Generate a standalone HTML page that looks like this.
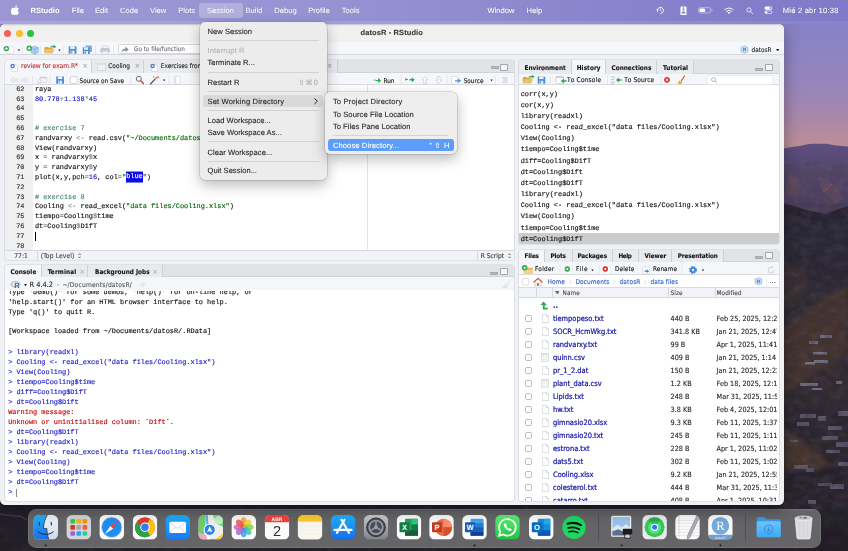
<!DOCTYPE html>
<html lang="es">
<head>
<meta charset="utf-8">
<title>datosR - RStudio</title>
<style>
*{box-sizing:border-box;margin:0;padding:0}
html,body{width:848px;height:551px;overflow:hidden}
body{position:relative;background:#2c2730;font-family:"DejaVu Sans Condensed","DejaVu Sans","Liberation Sans",sans-serif;font-size:6.4px;color:#111;text-rendering:geometricPrecision;-webkit-text-stroke:.1px currentColor;-webkit-font-smoothing:antialiased}
body>div{will-change:transform}
.abs{position:absolute}
.t{position:absolute;white-space:nowrap;line-height:1;transform:translateY(-50%)}
.b{font-weight:bold}
.mono{font-family:"Liberation Mono","DejaVu Sans Mono",monospace;font-size:6.92px;-webkit-text-stroke:.15px currentColor}
/* wallpaper */
#wall{position:absolute;left:0;top:0;width:848px;height:551px}
/* menubar */
#menubar{z-index:5;position:absolute;left:0;top:0;width:848px;height:21px;background:linear-gradient(90deg,#9c97d4 0%,#9893d2 35%,#8e8acf 60%,#8480cb 80%,#7f7bc9 100%);font-family:"Liberation Sans",sans-serif;font-size:7.6px;color:#fff}
#menubar .t{top:11px;text-shadow:0 0 1.5px rgba(40,30,90,.35)}
#strip{z-index:4;position:absolute;left:0;top:21px;width:848px;height:3.2px;background:linear-gradient(90deg,#a9a4db 0%,#a39edb 40%,#938ed2 75%,#8882c8 100%)}
/* window */
#win{z-index:1;position:absolute;left:0;top:24.2px;width:783.5px;height:481.3px;border-radius:5.5px;background:#eff1f4;box-shadow:0 5px 16px rgba(0,0,0,.35);overflow:hidden}
#pg{position:absolute;left:0;top:-24.2px;width:848px;height:551px}
#titlebar{position:absolute;left:0;top:24px;width:784px;height:18px;background:#f1f1f1}
#maintb{position:absolute;left:0;top:42px;width:784px;height:13.5px;background:#f5f7fa;border-bottom:.5px solid #d5d9de}
.pane{position:absolute;background:#fff;box-shadow:0 0 0 .6px #cdd2d8;border-radius:2px;overflow:hidden}
.tabrow{position:absolute;left:0;top:0;width:100%;background:#e1e3e7;border-bottom:.5px solid #cfd4d9}
.tab{position:absolute;top:0;height:100%;border-right:.5px solid #cdd1d6;background:#e8eaed}
.tab.sel{background:#f4f6f9}
.ptb{position:absolute;left:0;width:100%;background:#f4f6f9;border-bottom:.5px solid #d9dde2}
</style>
</head>
<body>
<!--WALL-->
<svg id="wall" width="848" height="551" viewBox="0 0 848 551">
<defs>
<linearGradient id="sky" x1="0" y1="0" x2="0" y2="1">
<stop offset="0" stop-color="#847fc6"/>
<stop offset=".15" stop-color="#8781c6"/>
<stop offset=".35" stop-color="#8d84c3"/>
<stop offset=".58" stop-color="#9885ba"/>
<stop offset=".75" stop-color="#a787ad"/>
<stop offset=".88" stop-color="#b58b9f"/>
<stop offset=".95" stop-color="#ba8e98"/>
<stop offset="1" stop-color="#b0868f"/>
</linearGradient>
<linearGradient id="m1" x1="0" y1="0" x2="0" y2="1"><stop offset="0" stop-color="#5f507e"/><stop offset="1" stop-color="#52466f"/></linearGradient>
<linearGradient id="m2" x1="0" y1="0" x2="0" y2="1"><stop offset="0" stop-color="#54466a"/><stop offset=".5" stop-color="#4d4160"/><stop offset="1" stop-color="#473b56"/></linearGradient>
<linearGradient id="m3" x1="0" y1="0" x2="0" y2="1">
<stop offset="0" stop-color="#25222e"/><stop offset=".15" stop-color="#2a2733"/><stop offset=".3" stop-color="#2e2a32"/><stop offset=".45" stop-color="#352c30"/><stop offset=".6" stop-color="#2d282e"/><stop offset="1" stop-color="#211e27"/>
</linearGradient>
<filter id="nz" x="0" y="0" width="100%" height="100%"><feTurbulence type="fractalNoise" baseFrequency=".09 .13" numOctaves="3" seed="7" result="n"/><feColorMatrix in="n" type="matrix" values="0 0 0 0 .42  0 0 0 0 .32  0 0 0 0 .32  1.6 0 0 0 -.66"/></filter>
<filter id="nz2" x="0" y="0" width="100%" height="100%"><feTurbulence type="fractalNoise" baseFrequency=".12 .16" numOctaves="3" seed="3" result="n"/><feColorMatrix in="n" type="matrix" values="0 0 0 0 .04  0 0 0 0 .03  0 0 0 0 .06  0 1.8 0 0 -.7"/></filter>
<filter id="bl" x="-5%" y="-5%" width="110%" height="110%"><feGaussianBlur stdDeviation=".7"/></filter>
<filter id="bl2" x="-10%" y="-10%" width="120%" height="120%"><feGaussianBlur stdDeviation="2.200"/></filter>
</defs>
<rect width="848" height="551" fill="#211e27"/>
<rect width="848" height="152" fill="url(#sky)"/>
<g filter="url(#bl)">
<path d="M760 154 L784 148.500 L792 147 L800 146 L806 144.500 L812 143.800 L826 143.800 L836 145.500 L848 146.500 L848 172 L760 172Z" fill="url(#m1)"/>
<path d="M760 168 L784 164 L790 162.500 L799 161 L806 162 L815 160 L826 161.500 L838 160.500 L848 162 L848 218 L760 218Z" fill="url(#m2)"/>
<path d="M790 170l12 14-6 18-12-8z M818 176l16 8 10 14-8 6-14-14z" fill="#6a4a58" fill-opacity=".45"/>
<path d="M832 184l-9 8" stroke="#c8a8a0" stroke-opacity=".3" stroke-width=".8"/>
<path d="M760 202 L784 203.500 L796 206.500 L806 210 L816 212 L826 214 L836 210 L848 206 L848 551 L760 551Z" fill="url(#m3)"/>
</g>
<g filter="url(#bl2)">
<path d="M848 285 L820 300 L800 315 L784 330 L784 392 L806 380 L826 366 L848 350Z" fill="#46342f" fill-opacity=".9"/>
<path d="M784 262 L800 268 L812 282 L800 300 L784 310Z" fill="#3b302f" fill-opacity=".8"/>
<path d="M784 428 L806 444 L832 466 L812 470 L784 470Z" fill="#46352c" fill-opacity=".95"/>
<path d="M784 215l30 8 34-4v30l-64 6z" fill="#2a2734" fill-opacity=".9"/>
</g>
<g filter="url(#bl)"><rect x="820.0" y="335.0" width="12.0" height="3.0" fill="#77758c" fill-opacity="0.9"/><rect x="809.0" y="341.0" width="9.0" height="3.0" fill="#77758c" fill-opacity="0.9"/><rect x="813.0" y="352.0" width="14.0" height="2.5" fill="#77758c" fill-opacity="0.9"/><rect x="805.0" y="362.0" width="10.0" height="2.5" fill="#77758c" fill-opacity="0.9"/><rect x="814.0" y="360.0" width="14.0" height="3.0" fill="#77758c" fill-opacity="0.9"/><rect x="800.0" y="383.0" width="18.0" height="3.0" fill="#77758c" fill-opacity="0.9"/><rect x="836.0" y="381.0" width="6.0" height="3.0" fill="#77758c" fill-opacity="0.9"/><rect x="812.0" y="388.0" width="10.0" height="2.0" fill="#77758c" fill-opacity="0.9"/><rect x="838.0" y="411.0" width="10.0" height="5.0" fill="#5f5d72" fill-opacity="0.85"/><rect x="800.0" y="414.0" width="16.0" height="4.0" fill="#5f5d72" fill-opacity="0.85"/><rect x="818.0" y="416.0" width="8.0" height="5.0" fill="#5f5d72" fill-opacity="0.85"/><rect x="797.0" y="422.0" width="12.0" height="4.0" fill="#5f5d72" fill-opacity="0.85"/><rect x="828.0" y="426.0" width="14.0" height="4.0" fill="#5f5d72" fill-opacity="0.85"/><rect x="822.0" y="436.0" width="16.0" height="4.0" fill="#5f5d72" fill-opacity="0.85"/><rect x="836.0" y="442.0" width="12.0" height="5.0" fill="#5f5d72" fill-opacity="0.85"/><rect x="826.0" y="450.0" width="14.0" height="3.0" fill="#5f5d72" fill-opacity="0.85"/><rect x="838.0" y="462.0" width="10.0" height="4.0" fill="#5f5d72" fill-opacity="0.85"/><rect x="794.0" y="465.0" width="14.0" height="4.0" fill="#5f5d72" fill-opacity="0.85"/><rect x="806.0" y="468.0" width="8.0" height="4.0" fill="#5f5d72" fill-opacity="0.85"/><rect x="818.0" y="483.0" width="14.0" height="3.0" fill="#5f5d72" fill-opacity="0.85"/><rect x="830.0" y="484.0" width="14.0" height="5.0" fill="#5f5d72" fill-opacity="0.85"/><rect x="808.0" y="500.0" width="8.0" height="4.0" fill="#5f5d72" fill-opacity="0.85"/><rect x="790.0" y="440.0" width="8.0" height="2.0" fill="#5f5d72" fill-opacity="0.85"/></g>
<rect x="784" y="160" width="64" height="350" filter="url(#nz)" opacity=".16"/>
<rect x="784" y="204" width="64" height="306" filter="url(#nz2)" opacity=".6"/>
<rect x="0" y="506" width="848" height="45" filter="url(#nz)" opacity=".08"/>
<path d="M0 514c8 1 14 3 20 2l7 4" stroke="#4a3e58" stroke-width="1.500" fill="none" stroke-opacity=".7"/>
</svg>
<!--MENUBAR-->
<div id="menubar">
<div class="abs" style="left:199px;top:3px;width:44px;height:14.5px;border-radius:3px;background:rgba(255,255,255,.26)"></div>
<svg class="abs" style="left:10.8px;top:4.6px" width="8.6" height="10.4" viewBox="0 0 170 205"><path fill="#fff" d="M150.4 155.7c-2.9 6.7-6.3 12.8-10.300 18.500-5.400 7.700-9.900 13.100-13.300 16.100-5.300 4.900-11 7.400-17.100 7.500-4.400 0-9.700-1.200-15.800-3.800-6.200-2.500-11.800-3.800-17-3.800-5.400 0-11.300 1.200-17.500 3.800-6.300 2.500-11.300 3.900-15.200 4-5.900 0.300-11.700-2.300-17.600-7.800-3.700-3.200-8.400-8.800-13.900-16.700-6-8.400-10.900-18.100-14.700-29.200C3.800 132.300 1.800 120.700 1.800 109.500c0-12.800 2.800-23.900 8.300-33.200 4.400-7.400 10.200-13.300 17.400-17.600 7.300-4.300 15.100-6.500 23.500-6.600 4.600 0 10.700 1.400 18.200 4.200 7.500 2.800 12.300 4.200 14.400 4.200 1.600 0 6.900-1.700 16-5 8.600-3.100 15.900-4.400 21.800-3.900 16.100 1.300 28.300 7.700 36.300 19.200-14.400 8.700-21.600 21-21.400 36.700 0.100 12.200 4.600 22.400 13.300 30.500 3.900 3.700 8.300 6.600 13.200 8.700-1.100 3.100-2.200 6-3.400 8.900zM119.100 7c0 9.600-3.500 18.600-10.500 26.900-8.400 9.900-18.700 15.600-29.700 14.700-0.100-1.200-0.200-2.400-0.200-3.600 0-9.200 4-19.100 11.100-27.200 3.600-4.100 8.100-7.500 13.600-10.200C108.900 4.900 114.100 3.400 119 3.100c0.100 1.300 0.200 2.600 0.200 3.900z"/></svg>
<span class="t b" style="left:30.5px">RStudio</span>
<span class="t" style="left:71.75px">File</span>
<span class="t" style="left:95px">Edit</span>
<span class="t" style="left:120px">Code</span>
<span class="t" style="left:150px">View</span>
<span class="t" style="left:178.25px">Plots</span>
<span class="t" style="left:207px">Session</span>
<span class="t" style="left:245.5px">Build</span>
<span class="t" style="left:274.25px">Debug</span>
<span class="t" style="left:308.25px">Profile</span>
<span class="t" style="left:341.75px">Tools</span>
<span class="t" style="left:487.5px">Window</span>
<span class="t" style="left:526.5px">Help</span>
<span class="t" style="letter-spacing:0.201px;left:782.800px">Mié 2 abr 10:38</span>
<svg class="abs" style="left:656.4px;top:6px" width="8.800" height="8.800" viewBox="0 0 20 20"><circle cx="10" cy="10" r="7" fill="none" stroke="#fff" stroke-width="1.8" stroke-dasharray="36 8" transform="rotate(150 10 10)"/><path d="M10 6v4.300l2.600 1.800" fill="none" stroke="#fff" stroke-width="1.600" stroke-linecap="round"/><path d="M1 8l2.500 3.500L6.500 8z" fill="#fff"/></svg>
<svg class="abs" style="left:679.5px;top:5.700px" width="7" height="9.600" viewBox="0 0 16 22"><rect x="1" y="1" width="14" height="20" rx="3" fill="#fff"/><circle cx="8" cy="8" r="2.600" fill="#8480cb"/><path d="M3.500 17c0-3 2-4.800 4.500-4.800s4.500 1.800 4.500 4.800z" fill="#8480cb"/><rect x="6" y="2.500" width="4" height="1.400" rx=".7" fill="#8480cb"/></svg>
<svg class="abs" style="left:698.3px;top:7.200px" width="15" height="6.600" viewBox="0 0 30 16" preserveAspectRatio="none"><rect x="1" y="1.500" width="24" height="13" rx="4" fill="none" stroke="#fff" stroke-opacity=".6" stroke-width="1.600"/><rect x="3.200" y="3.700" width="11" height="8.600" rx="2.200" fill="#fff"/><path d="M27 5.500c1.600.500 2.200 1.400 2.200 2.500s-.6 2-2.200 2.500z" fill="#fff" fill-opacity=".6"/></svg>
<svg class="abs" style="left:724.2px;top:7px" width="9.800" height="7.200" viewBox="0 0 26 19"><path d="M13 18.500l3.400-3.600a4.700 4.700 0 0 0-6.800 0z" fill="#fff"/><path d="M6.300 11.600a9.400 9.400 0 0 1 13.400 0" fill="none" stroke="#fff" stroke-width="2.600" stroke-linecap="round"/><path d="M2 7a15.500 15.500 0 0 1 22 0" fill="none" stroke="#fff" stroke-width="2.600" stroke-linecap="round"/></svg>
<svg class="abs" style="left:746px;top:6.800px" width="7.400" height="7.400" viewBox="0 0 20 20"><circle cx="8" cy="8" r="5.800" fill="none" stroke="#fff" stroke-width="2"/><path d="M12.400 12.400l5.600 5.600" stroke="#fff" stroke-width="2.200" stroke-linecap="round"/></svg>
<svg class="abs" style="left:763.800px;top:6.400px" width="8.800" height="8.300" viewBox="0 0 21 20"><rect x="1" y="1" width="19" height="8" rx="4" fill="#fff"/><circle cx="15.600" cy="5" r="2.500" fill="#8480cb"/><rect x="1.700" y="11.700" width="17.600" height="6.600" rx="3.300" fill="none" stroke="#fff" stroke-width="1.500"/><circle cx="5.300" cy="15" r="2.600" fill="#fff"/></svg>
</div>
<div id="strip"></div>
<!--WINDOW-->
<div id="win">
<div id="pg">
<div id="titlebar"></div>
<div id="maintb"></div>
<div id="topline" class="abs" style="z-index:2;left:0;top:24px;width:784px;height:2px;background:linear-gradient(#cfcfcf 50%,#e5e5e5 50%)"></div>
<div class="abs" style="left:4.1px;top:30px;width:7.2px;height:7.2px;border-radius:50%;background:#f5605a"></div>
<div class="abs" style="left:16.0px;top:30px;width:7.2px;height:7.2px;border-radius:50%;background:#f9bd2e"></div>
<div class="abs" style="left:27.2px;top:30px;width:7.2px;height:7.2px;border-radius:50%;background:#27c53f"></div>
<span class="t b" style="letter-spacing:0.080px;left:360.5px;top:33.3px;font-family:'Liberation Sans',sans-serif;font-size:7.55px;color:#3a3a3a">datosR - RStudio</span>
<!-- main toolbar -->
<svg class="abs" style="left:2px;top:43.800px" width="112" height="12" viewBox="0 0 112 12">
<!-- new file -->
<rect x="5" y="2.200" width="6.500" height="7.600" fill="#fff" stroke="#c9ccd1" stroke-width=".4"/>
<circle cx="4.400" cy="4.600" r="2.700" fill="#2fa84f"/><path d="M2.900 4.600h3M4.400 3.100v3" stroke="#fff" stroke-width="1"/>
<path d="M15.700 5.600h2.400l-1.200 1.600z" fill="#222"/>
<path d="M20.500 1.500v9" stroke="#d0d4d9" stroke-width=".5"/>
<!-- new project -->
<path d="M29 3.500l4-1.500 3.500 1.500v5l-3.700 1.800-3.800-1.800z" fill="#a9cdee" stroke="#6fa5d8" stroke-width=".4"/>
<path d="M29 3.500l3.800 1.600 3.700-1.600M32.800 5.100v5.200" stroke="#6fa5d8" stroke-width=".4" fill="none"/>
<circle cx="27.200" cy="4.300" r="2.700" fill="#2fa84f"/><path d="M25.700 4.300h3M27.200 2.800v3" stroke="#fff" stroke-width="1"/>
<path d="M38.600 1.500v9" stroke="#d0d4d9" stroke-width=".5"/>
<!-- open folder -->
<path d="M42.500 9.500l1.500-4.500h8.500l-1.700 4.500z" fill="#e9c36b"/><path d="M42.300 9.400v-5.600l1-.9h2.600l.8.900h3.800v1.300h-6.500z" fill="#d9a63f"/>
<path d="M47.500 3.800c1.500-1.800 3-2.200 4.300-1.900v-1.100l2.300 1.900-2.300 1.900v-1.100c-1.400-.3-2.800-.2-4.300.3z" fill="#2fa84f"/>
<path d="M56.200 5.600h2.400l-1.200 1.600z" fill="#222"/>
<path d="M61 1.500v9" stroke="#d0d4d9" stroke-width=".5"/>
<!-- save -->
<path d="M66.700 2.200h7l.8.800v6.800h-7.800z" fill="#4d8fd6"/><rect x="68.200" y="2.200" width="4.600" height="2.800" fill="#eaf2fb"/><rect x="68.500" y="6.700" width="4" height="3.100" fill="#eaf2fb"/><rect x="69.200" y="7.200" width="1.100" height="2" fill="#4d8fd6"/>
<!-- save all -->
<path d="M83.300 1.600h6l.7.700v5.800h-6.700z" fill="#7fb0e4"/>
<path d="M80.800 3.300h6.300l.7.700v6h-7z" fill="#4d8fd6"/><rect x="82.100" y="3.300" width="4" height="2.400" fill="#eaf2fb"/><rect x="82.400" y="7.200" width="3.600" height="2.800" fill="#eaf2fb"/><rect x="83" y="7.700" width="1" height="1.800" fill="#4d8fd6"/>
<path d="M93.600 1.500v9" stroke="#d0d4d9" stroke-width=".5"/>
<!-- print -->
<rect x="100" y="2" width="6" height="3" fill="#f4f4f4" stroke="#b9bdc6" stroke-width=".4"/><rect x="98.600" y="4.500" width="8.800" height="4" rx=".8" fill="#c7cbe0" stroke="#a3a8c4" stroke-width=".4"/><rect x="100" y="7.300" width="6" height="2.400" fill="#fff" stroke="#b9bdc6" stroke-width=".4"/>
<path d="M111.700 1.500v9" stroke="#d0d4d9" stroke-width=".5"/>
</svg>
<div class="abs" style="left:117.500px;top:44.200px;width:96px;height:10.300px;background:#fff;border:.5px solid #d3d7dc;border-radius:1.500px"></div>
<svg class="abs" style="left:120.500px;top:46.200px" width="8" height="7" viewBox="0 0 8 7"><path d="M.5 6.500c.3-2.600 1.700-4 4-4.100v-1.900l3.200 2.900-3.200 2.900v-1.900c-1.800 0-3 .7-4 2.100z" fill="#8d939c"/></svg>
<span class="t" style="left:134px;top:50.600px;color:#6a6a6a;font-size:6.300px">Go to file/function</span>
<svg class="abs" style="left:740px;top:45px" width="9" height="9" viewBox="0 0 9 9"><path d="M1 2.300l3.500-1.500 3.500 1.500v4.500l-3.500 1.700-3.500-1.700z" fill="#bcd9f3" stroke="#7fb0e0" stroke-width=".4"/><text x="4.500" y="6.300" font-size="4.500" font-weight="bold" text-anchor="middle" fill="#3f7fc4" font-family="Liberation Sans,sans-serif">R</text></svg>
<span class="t" style="left:751.600px;top:50.200px;font-size:6.400px;color:#222">datosR</span>
<svg class="abs" style="left:776.300px;top:48.800px" width="3.400" height="2.400" viewBox="0 0 3.400 2.400"><path d="M0 0h3.400l-1.700 2.400z" fill="#222"/></svg>

<div class="pane" style="left:5px;top:60.500px;width:508.500px;height:199.500px">
<div class="tabrow" style="height:12.8px"></div>
<div class="tab sel" style="left:0;width:87px;height:13.3px;border-radius:2px 2px 0 0"></div>
<div class="tab" style="left:87px;width:52px;height:12.8px"></div>
<div class="tab" style="left:139px;width:98px;height:12.8px"></div>
<div class="tab" style="left:237px;width:95.5px;height:12.8px"></div>
<svg class="abs" style="left:4.5px;top:2.5px" width="8" height="9" viewBox="0 0 8 9"><path d="M2 1.500h3.800l1.700 1.700v5.300h-5.500z" fill="#fff" stroke="#b4b8bf" stroke-width=".4"/><circle cx="2.600" cy="3" r="2.300" fill="#5a78c8"/><circle cx="2.600" cy="3" r="1" fill="#dfe6f7"/></svg>
<span class="t" style="left:16.100px;top:5.900px;color:#c22a22;font-size:6.600px">review for exam.R*</span>
<span class="t" style="left:77.500px;top:6.000px;color:#9aa0a8;font-size:7px">×</span>
<svg class="abs" style="left:92px;top:3px" width="8.500" height="7.500" viewBox="0 0 8.500 7.500"><rect x=".3" y=".3" width="7.900" height="6.900" fill="#fff" stroke="#b9bdc4" stroke-width=".5"/><path d="M.3 2.300h7.900M.3 4h7.900M.3 5.700h7.900M2.900 .3v6.900M5.600 .3v6.900" stroke="#d4d7dc" stroke-width=".4"/><rect x=".3" y=".3" width="7.900" height="1.600" fill="#dcdfe4"/></svg>
<span class="t" style="left:103.300px;top:5.900px;color:#222;font-size:6.450px">Cooling</span>
<span class="t" style="left:129.800px;top:6.000px;color:#9aa0a8;font-size:7px">×</span>
<svg class="abs" style="left:144.500px;top:2.500px" width="8" height="9" viewBox="0 0 8 9"><path d="M2 1.500h3.800l1.700 1.700v5.300h-5.500z" fill="#fff" stroke="#b4b8bf" stroke-width=".4"/><circle cx="2.600" cy="3" r="2.300" fill="#5a78c8"/><circle cx="2.600" cy="3" r="1" fill="#dfe6f7"/></svg>
<span class="t" style="left:155.800px;top:5.900px;color:#222;font-size:6.450px">Exercises from class.R</span>
<span class="t" style="left:229px;top:6.000px;color:#9aa0a8;font-size:7px">×</span>
<span class="t" style="left:250px;top:5.900px;color:#222;font-size:6.450px">homework week 3.R</span>
<span class="t" style="left:322px;top:6.000px;color:#9aa0a8;font-size:7px">×</span>
<div class="abs" style="left:485.5px;top:5.900px;width:8px;height:2.800px;border-radius:.8px;background:#b9bdc3;border:.4px solid #a3a8af"></div>
<div class="abs" style="left:494.8px;top:3.3px;width:8px;height:7.200px;border:.5px solid #a3a8af;border-top-width:1.400px;border-radius:.8px;background:#f4f6f8"></div>
<div class="ptb" style="top:12.800px;height:12px"></div>
<svg class="abs" style="left:0;top:14.000px" width="509" height="12" viewBox="0 0 509 12">
<path d="M5 6l4-3.200v1.900h4v2.600h-4v1.900z" fill="#e9ebee" stroke="#d2d5da" stroke-width=".4"/>
<path d="M24 6l-4-3.200v1.900h-4v2.600h4v1.900z" fill="#e9ebee" stroke="#d2d5da" stroke-width=".4"/>
<path d="M27.500 1.500v9" stroke="#d4d8dd" stroke-width=".5"/>
<rect x="35" y="3" width="7" height="5.500" rx=".6" fill="#f2f4f7" stroke="#b9bec6" stroke-width=".4"/><rect x="35" y="3" width="7" height="1.400" fill="#c7cfdc"/><circle cx="34.500" cy="7.500" r="1.700" fill="#fff" stroke="#a8adb5" stroke-width=".5"/><path d="M33.400 8.700l-1.300 1.400" stroke="#a8adb5" stroke-width=".7"/>
<path d="M45 1.500v9" stroke="#d4d8dd" stroke-width=".5"/>
<path d="M51.200 2.200h7l.8.800v6.800h-7.800z" fill="#4d8fd6"/><rect x="52.700" y="2.200" width="4.600" height="2.800" fill="#eaf2fb"/><rect x="53" y="6.700" width="4" height="3.100" fill="#eaf2fb"/><rect x="53.700" y="7.200" width="1.100" height="2" fill="#4d8fd6"/>
<rect x="65.300" y="2.600" width="7" height="7" rx="1.500" fill="#fff" stroke="#a9a9a9" stroke-width=".5"/>
<path d="M125.500 1.500v9" stroke="#d4d8dd" stroke-width=".5"/>
<circle cx="133.800" cy="4.800" r="2.500" fill="#eef3fa" stroke="#4a4f57" stroke-width=".8"/><path d="M135.600 6.600l2.800 2.900" stroke="#b0482e" stroke-width="1.300" stroke-linecap="round"/>
<path d="M145.500 10l6-6.500" stroke="#555b66" stroke-width="1.200" stroke-linecap="round"/><path d="M150.200 4.800l1.300-1.400" stroke="#e8b530" stroke-width="1.300" stroke-linecap="round"/><path d="M153 1.500l.5 1.200 1.200.5-1.200.5-.5 1.200-.5-1.200-1.200-.5 1.200-.5z" fill="#e0559a"/><path d="M148.500 1.800l.3.800.8.300-.8.300-.3.800-.3-.8-.8-.3.800-.3z" fill="#58a6e8"/>
<path d="M158 5.600h2.400l-1.200 1.600z" fill="#222"/>
<path d="M164 1.500v9" stroke="#d4d8dd" stroke-width=".5"/>
<rect x="169.500" y="2.300" width="6" height="7.600" rx=".5" fill="#fff" stroke="#c3c7cd" stroke-width=".5"/><rect x="169.500" y="2.300" width="1.800" height="7.600" fill="#dfe2e7"/>
<path d="M368 6h3" stroke="#9ec0ea" stroke-width="1.200"/><path d="M370.500 6h2.500v-2l3.200 2.500-3.200 2.500v-2h-2.500z" fill="#2fa84f"/>
<path d="M396 1.500v9" stroke="#d4d8dd" stroke-width=".5"/>
<path d="M400.500 5.500h2.500" stroke="#4d8fd6" stroke-width="1.200"/><path d="M400.800 3.500l2 1.800-2 1.800z" fill="#4d8fd6" transform="translate(-.5 0)"/><path d="M404.500 5h2.300v-1.800l3 2.500-3 2.500v-1.800h-2.300z" fill="#2fa84f"/>
<path d="M420 2.500l3 3.300h-1.700v3.700h-2.600v-3.700h-1.700z" fill="#f7f8fa" stroke="#bfc3c9" stroke-width=".55"/>
<path d="M433.800 9.500l3-3.300h-1.700v-3.700h-2.600v3.700h-1.700z" fill="#f7f8fa" stroke="#bfc3c9" stroke-width=".55"/>
<path d="M442 1.500v9" stroke="#d4d8dd" stroke-width=".5"/>
<rect x="446.500" y="2.500" width="6" height="7.500" rx=".5" fill="#fff" stroke="#c3c7cd" stroke-width=".5"/><path d="M450 6.200h3v-1.600l3 2.200-3 2.200v-1.600h-3z" fill="#4d8fd6"/>
<path d="M485.300 5.600h2.400l-1.200 1.600z" fill="#222"/>
<path d="M490.500 1.500v9" stroke="#d4d8dd" stroke-width=".5"/>
<path d="M497 4h5.500M498.500 6h4M497 8h5.500" stroke="#b9bdc4" stroke-width=".8"/>
</svg>
<span class="t" style="left:74.500px;top:20.400px;font-size:6.400px">Source on Save</span>
<span class="t" style="left:378.500px;top:20.400px;font-size:6.400px">Run</span>
<span class="t" style="left:458.700px;top:20.400px;font-size:6.400px">Source</span>
<div class="abs" style="left:0;top:24.500px;width:28px;height:166px;background:#f0f0f0"></div>
<div class="abs" style="left:361.800px;top:24.500px;width:.6px;height:166px;background:#e4e4e4"></div>
<span class="t mono" style="right:489.0px;top:29.39px;color:#333">62</span>
<span class="t mono" style="left:29.900px;top:29.39px"><span style="color:#111">raya</span></span>
<span class="t mono" style="right:489.0px;top:39.20px;color:#333">63</span>
<span class="t mono" style="left:29.900px;top:39.20px"><span style="color:#1a1ac8">80.778</span><span style="color:#7b8797">+</span><span style="color:#1a1ac8">1.138</span><span style="color:#7b8797">*</span><span style="color:#1a1ac8">45</span></span>
<span class="t mono" style="right:489.0px;top:49.01px;color:#333">64</span>
<span class="t mono" style="right:489.0px;top:58.82px;color:#333">65</span>
<span class="t mono" style="right:489.0px;top:68.63px;color:#333">66</span>
<span class="t mono" style="left:29.900px;top:68.63px"><span style="color:#4c886b"># exercise 7</span></span>
<span class="t mono" style="right:489.0px;top:78.44px;color:#333">67</span>
<span class="t mono" style="left:29.900px;top:78.44px"><span style="color:#111">randvarxy </span><span style="color:#7b8797">&lt;-</span><span style="color:#111"> read.csv(</span><span style="color:#036a07">"~/Documents/datosR/data files/randvarxy.txt"</span><span style="color:#111">, header=TRUE)</span></span>
<span class="t mono" style="right:489.0px;top:88.25px;color:#333">68</span>
<span class="t mono" style="left:29.900px;top:88.25px"><span style="color:#111">View(randvarxy)</span></span>
<span class="t mono" style="right:489.0px;top:98.06px;color:#333">69</span>
<span class="t mono" style="left:29.900px;top:98.06px"><span style="color:#111">x </span><span style="color:#7b8797">=</span><span style="color:#111"> randvarxy</span><span style="color:#7b8797">$</span><span style="color:#111">x</span></span>
<span class="t mono" style="right:489.0px;top:107.87px;color:#333">70</span>
<span class="t mono" style="left:29.900px;top:107.87px"><span style="color:#111">y </span><span style="color:#7b8797">=</span><span style="color:#111"> randvarxy</span><span style="color:#7b8797">$</span><span style="color:#111">y</span></span>
<span class="t mono" style="right:489.0px;top:117.68px;color:#333">71</span>
<span class="t mono" style="left:29.900px;top:117.68px"><span style="color:#111">plot(x,y,pch</span><span style="color:#7b8797">=</span><span style="color:#1a1ac8">16</span><span style="color:#111">, col</span><span style="color:#7b8797">=</span><span style="color:#036a07">"</span><span style="background:#0c0ce8;color:#fff;padding:1.600px 0 1.500px">blue</span><span style="color:#036a07">"</span><span style="color:#111">)</span></span>
<span class="t mono" style="right:489.0px;top:127.49px;color:#333">72</span>
<span class="t mono" style="right:489.0px;top:137.30px;color:#333">73</span>
<span class="t mono" style="left:29.900px;top:137.30px"><span style="color:#4c886b"># exercise 8</span></span>
<span class="t mono" style="right:489.0px;top:147.11px;color:#333">74</span>
<span class="t mono" style="left:29.900px;top:147.11px"><span style="color:#111">Cooling </span><span style="color:#7b8797">&lt;-</span><span style="color:#111"> read_excel(</span><span style="color:#036a07">"data files/Cooling.xlsx"</span><span style="color:#111">)</span></span>
<span class="t mono" style="right:489.0px;top:156.92px;color:#333">75</span>
<span class="t mono" style="left:29.900px;top:156.92px"><span style="color:#111">tiempo</span><span style="color:#7b8797">=</span><span style="color:#111">Cooling</span><span style="color:#7b8797">$</span><span style="color:#111">time</span></span>
<span class="t mono" style="right:489.0px;top:166.73px;color:#333">76</span>
<span class="t mono" style="left:29.900px;top:166.73px"><span style="color:#111">dt</span><span style="color:#7b8797">=</span><span style="color:#111">Cooling</span><span style="color:#7b8797">$</span><span style="color:#111">DifT</span></span>
<span class="t mono" style="right:489.0px;top:176.54px;color:#333">77</span>
<span class="t mono" style="right:489.0px;top:186.35px;color:#333">78</span>
<div class="abs" style="left:30px;top:171.74px;width:.7px;height:8.600px;background:#000"></div>
<div class="abs" style="left:0;top:190px;width:100%;height:9.500px;background:#f1f3f6;border-top:.5px solid #d5d9de"></div>
<div class="abs" style="left:31.500px;top:190px;width:.5px;height:9.500px;background:#d5d9de"></div>
<svg class="abs" style="left:72.600px;top:192.300px" width="3.200" height="5.600" viewBox="0 0 3.200 5.600"><path d="M.4 2l1.200-1.300 1.200 1.300M.4 3.600l1.200 1.300 1.200-1.300" fill="none" stroke="#333" stroke-width=".7"/></svg>
<span class="t" style="letter-spacing:0.021px;left:9.200px;top:195.300px;font-size:6.700px;color:#444">77:1</span>
<span class="t" style="letter-spacing:0.117px;left:35.750px;top:195.300px;font-size:6.700px;color:#444">(Top Level)</span>
<span class="t" style="letter-spacing:0.023px;left:475.750px;top:195.300px;font-size:6.600px;color:#333">R Script</span>
<svg class="abs" style="left:502.6px;top:192.3px" width="3.200" height="5.600" viewBox="0 0 3.200 5.600"><path d="M.4 2l1.200-1.300 1.200 1.300M.4 3.600l1.200 1.300 1.200-1.300" fill="none" stroke="#333" stroke-width=".7"/></svg>
<div class="abs" style="left:472.300px;top:190px;width:.5px;height:9.500px;background:#d5d9de"></div>
</div>
<div class="pane" style="left:5px;top:265px;width:508.500px;height:236.500px">
<div class="tabrow" style="height:12.500px"></div>
<div class="tab sel" style="left:0;width:37px;height:13px;background:#f4f6f9"></div>
<div class="tab" style="left:37px;width:46px;height:12.500px"></div>
<div class="tab" style="left:83px;width:75px;height:12.500px"></div>
<span class="t b" style="letter-spacing:0.069px;left:5.400px;top:6.800px;font-size:6.400px">Console</span>
<span class="t b" style="letter-spacing:0.110px;left:42.700px;top:6.800px;font-size:6.400px">Terminal</span>
<span class="t" style="left:74.500px;top:6.700px;color:#a9aeb5;font-size:7px">×</span>
<span class="t b" style="letter-spacing:0.018px;left:90px;top:6.800px;font-size:6.400px">Background Jobs</span>
<span class="t" style="left:147.500px;top:6.700px;color:#a9aeb5;font-size:7px">×</span>
<div class="abs" style="left:484.5px;top:7.400px;width:8px;height:2.800px;border-radius:.8px;background:#b9bdc3;border:.4px solid #a3a8af"></div>
<div class="abs" style="left:494.8px;top:3.4px;width:8px;height:7.200px;border:.5px solid #a3a8af;border-top-width:1.400px;border-radius:.8px;background:#f4f6f8"></div>
<div class="abs" style="left:0;top:12.500px;width:100%;height:12.900px;background:#f4f6f9"></div>
<svg class="abs" style="left:4.500px;top:15.500px" width="11" height="9" viewBox="0 0 11 9"><ellipse cx="5.500" cy="4.300" rx="5" ry="3.600" fill="#c9ccd2"/><ellipse cx="6" cy="4.100" rx="3" ry="2" fill="#fff"/><text x="4.200" y="8" font-family="Liberation Sans,sans-serif" font-weight="bold" font-size="7.500" fill="#2668b8">R</text></svg>
<svg class="abs" style="left:18.800px;top:19.500px" width="3" height="2.200" viewBox="0 0 3 2.200"><path d="M0 0h3l-1.500 2.200z" fill="#222"/></svg>
<span class="t" style="left:24.600px;top:19.900px;font-size:7.300px;color:#222">R 4.4.2</span>
<span class="t" style="left:52px;top:19.900px;font-size:6.600px;color:#555">·</span>
<span class="t" style="letter-spacing:0.199px;left:57.400px;top:20px;font-size:6.650px;color:#555">~/Documents/datosR/</span>
<svg class="abs" style="left:135px;top:17.500px" width="6" height="5" viewBox="0 0 6 5"><path d="M.3 1.700h2.700v-1.400l2.700 2.200-2.700 2.200v-1.400h-2.700z" fill="#eceef1" stroke="#cfd3d8" stroke-width=".4"/></svg>
<svg class="abs" style="left:496px;top:15px" width="10" height="9" viewBox="0 0 10 9"><path d="M9 .5l-4.500 6" stroke="#d5d8dd" stroke-width=".8"/><path d="M1 8l3-3 2.500 1-1 2z" fill="#e4e6ea" stroke="#d5d8dd" stroke-width=".4"/></svg>
<div class="abs" style="left:0;top:25.800px;width:508.500px;height:210.700px;overflow:hidden">
<span class="t mono" style="left:3.200px;top:2.80px;color:#111">Type 'demo()' for some demos, 'help()' for on-line help, or</span>
<span class="t mono" style="left:3.200px;top:12.05px;color:#111">'help.start()' for an HTML browser interface to help.</span>
<span class="t mono" style="left:3.200px;top:22.05px;color:#111">Type 'q()' to quit R.</span>
<span class="t mono" style="left:3.200px;top:41.70px;color:#111">[Workspace loaded from ~/Documents/datosR/.RData]</span>
<span class="t mono" style="left:3.200px;top:62.05px;color:#1a1ac8">&gt; library(readxl)</span>
<span class="t mono" style="left:3.200px;top:72.10px;color:#1a1ac8">&gt; Cooling &lt;- read_excel("data files/Cooling.xlsx")</span>
<span class="t mono" style="left:3.200px;top:82.15px;color:#1a1ac8">&gt; View(Cooling)</span>
<span class="t mono" style="left:3.200px;top:92.20px;color:#1a1ac8">&gt; tiempo=Cooling$time</span>
<span class="t mono" style="left:3.200px;top:102.25px;color:#1a1ac8">&gt; diff=Cooling$DifT</span>
<span class="t mono" style="left:3.200px;top:112.30px;color:#1a1ac8">&gt; dt=Cooling$Dift</span>
<span class="t mono" style="left:3.200px;top:122.35px;color:#c5060b">Warning message:</span>
<span class="t mono" style="left:3.200px;top:132.40px;color:#c5060b">Unknown or uninitialised column: `Dift`.</span>
<span class="t mono" style="left:3.200px;top:142.45px;color:#1a1ac8">&gt; dt=Cooling$DifT</span>
<span class="t mono" style="left:3.200px;top:152.50px;color:#1a1ac8">&gt; library(readxl)</span>
<span class="t mono" style="left:3.200px;top:162.55px;color:#1a1ac8">&gt; Cooling &lt;- read_excel("data files/Cooling.xlsx")</span>
<span class="t mono" style="left:3.200px;top:172.60px;color:#1a1ac8">&gt; View(Cooling)</span>
<span class="t mono" style="left:3.200px;top:182.65px;color:#1a1ac8">&gt; tiempo=Cooling$time</span>
<span class="t mono" style="left:3.200px;top:192.70px;color:#1a1ac8">&gt; dt=Cooling$DifT</span>
<span class="t mono" style="left:3.200px;top:202.75px;color:#1a1ac8">&gt; </span>
<div class="abs" style="left:11.300px;top:197.95px;width:.6px;height:8.600px;background:#8a8a8a"></div>
</div>
</div>
<div class="pane" style="left:519px;top:60.5px;width:259.5px;height:184px">
<div class="tabrow" style="height:13.500px"></div>
<div class="tab" style="left:0px;width:53px;height:13.5px"></div>
<div class="tab sel" style="left:53px;width:34.3px;height:14px"></div>
<div class="tab" style="left:87.3px;width:51px;height:13.5px"></div>
<div class="tab" style="left:138.3px;width:36.7px;height:13.5px"></div>
<span class="t b" style="letter-spacing:-0.014px;left:5.6px;top:8.000px;font-size:6.400px">Environment</span>
<span class="t b" style="letter-spacing:0.057px;left:57.75px;top:8.000px;font-size:6.400px">History</span>
<span class="t b" style="letter-spacing:-0.005px;left:92.5px;top:8.000px;font-size:6.400px">Connections</span>
<span class="t b" style="letter-spacing:0.054px;left:144px;top:8.000px;font-size:6.400px">Tutorial</span>
<div class="abs" style="left:235.5px;top:7.500px;width:8px;height:2.800px;border-radius:.8px;background:#b9bdc3;border:.4px solid #a3a8af"></div>
<div class="abs" style="left:245.8px;top:3.5px;width:8px;height:7.200px;border:.5px solid #a3a8af;border-top-width:1.400px;border-radius:.8px;background:#f4f6f8"></div>
<div class="ptb" style="top:13.500px;height:11.500px"></div>
<svg class="abs" style="left:0;top:13.800px" width="259" height="12" viewBox="0 0 259 12">
<path d="M4 9.500l1.500-4.500h8.500l-1.700 4.500z" fill="#e9c36b"/><path d="M3.800 9.400v-5.600l1-.9h2.600l.8.900h3.800v1.300h-6.500z" fill="#d9a63f"/><path d="M9 3.800c1.500-1.800 3-2.200 4.300-1.900v-1.100l2.300 1.900-2.300 1.900v-1.100c-1.400-.3-2.800-.2-4.300.3z" fill="#2fa84f"/>
<path d="M18.700 2.400h6.800l.8.800v6.600h-7.600z" fill="#4d8fd6"/><rect x="20.100" y="2.400" width="4.500" height="2.700" fill="#eaf2fb"/><rect x="20.400" y="6.800" width="3.900" height="3" fill="#eaf2fb"/><rect x="21" y="7.300" width="1.100" height="1.900" fill="#4d8fd6"/>
<path d="M31 1.500v9" stroke="#d4d8dd" stroke-width=".5"/>
<rect x="37" y="2.500" width="7.500" height="7" rx=".5" fill="#fff" stroke="#b9bdc4" stroke-width=".5"/><rect x="37" y="2.500" width="7.500" height="1.500" fill="#c9cdd4"/><path d="M47.500 6.200h-2.600v-1.700l-3.100 2.500 3.100 2.500v-1.700h2.600z" fill="#2fa84f"/>
<path d="M88.500 1.500v9" stroke="#d4d8dd" stroke-width=".5"/>
<path d="M92 3h4M92 5.500h3M92 8h4M92 10h3" stroke="#b9bdc4" stroke-width=".9"/><path d="M102.500 5.200h-2.500v-1.700l-3 2.500 3 2.500v-1.700h2.500z" fill="#2fa84f"/>
<path d="M142 1.500v9" stroke="#d4d8dd" stroke-width=".5"/>
<circle cx="148" cy="5.800" r="2.900" fill="#d9312b"/><path d="M146.700 4.500l2.600 2.600M149.300 4.500l-2.600 2.600" stroke="#fff" stroke-width=".9"/>
<path d="M165.500 2l-3 4.500" stroke="#c9542c" stroke-width="1.100" stroke-linecap="round"/><path d="M160 6.500l3.500 1.200-1.500 2.800-3.300-.7z" fill="#e8b530"/>
<rect x="188" y="1.200" width="66" height="9.600" rx="1.500" fill="#fff" stroke="#d3d7dc" stroke-width=".5"/><circle cx="194.500" cy="5.500" r="2" fill="none" stroke="#9aa0a8" stroke-width=".7"/><path d="M196 7l1.700 1.800" stroke="#9aa0a8" stroke-width=".8"/>
</svg>
<span class="t" style="letter-spacing:0.151px;left:48px;top:20px;font-size:6.600px;font-kerning:none">To Console</span>
<span class="t" style="letter-spacing:0.040px;left:105.200px;top:20px;font-size:6.600px;font-kerning:none">To Source</span>
<div class="abs" style="left:0;top:172.6px;width:259.500px;height:11.500px;background:#cccccc"></div>
<span class="t mono" style="left:1.700px;top:34.35px;color:#111">corr(x,y)</span>
<span class="t mono" style="left:1.700px;top:45.51px;color:#111">cor(x,y)</span>
<span class="t mono" style="left:1.700px;top:56.68px;color:#111">library(readxl)</span>
<span class="t mono" style="left:1.700px;top:67.84px;color:#111">Cooling &lt;- read_excel("data files/Cooling.xlsx")</span>
<span class="t mono" style="left:1.700px;top:79.01px;color:#111">View(Cooling)</span>
<span class="t mono" style="left:1.700px;top:90.17px;color:#111">tiempo=Cooling$time</span>
<span class="t mono" style="left:1.700px;top:101.34px;color:#111">diff=Cooling$DifT</span>
<span class="t mono" style="left:1.700px;top:112.50px;color:#111">dt=Cooling$Dift</span>
<span class="t mono" style="left:1.700px;top:123.67px;color:#111">dt=Cooling$DifT</span>
<span class="t mono" style="left:1.700px;top:134.83px;color:#111">library(readxl)</span>
<span class="t mono" style="left:1.700px;top:146.00px;color:#111">Cooling &lt;- read_excel("data files/Cooling.xlsx")</span>
<span class="t mono" style="left:1.700px;top:157.16px;color:#111">View(Cooling)</span>
<span class="t mono" style="left:1.700px;top:168.33px;color:#111">tiempo=Cooling$time</span>
<span class="t mono" style="left:1.700px;top:179.49px;color:#111">dt=Cooling$DifT</span>
</div>
<div class="pane" style="left:519px;top:249.8px;width:259.500px;height:251.700px">
<div class="tabrow" style="height:12.500px"></div>
<div class="tab sel" style="left:0px;width:25.5px;height:13px"></div>
<div class="tab" style="left:25.5px;width:28px;height:12.5px"></div>
<div class="tab" style="left:53.5px;width:40.5px;height:12.5px"></div>
<div class="tab" style="left:94px;width:25.8px;height:12.5px"></div>
<div class="tab" style="left:119.8px;width:33.2px;height:12.5px"></div>
<div class="tab" style="left:153px;width:52px;height:12.5px"></div>
<span class="t b" style="letter-spacing:-0.154px;left:5.6px;top:7.400px;font-size:6.300px">Files</span>
<span class="t b" style="letter-spacing:-0.176px;left:31.6px;top:7.400px;font-size:6.300px">Plots</span>
<span class="t b" style="letter-spacing:-0.054px;left:58.4px;top:7.400px;font-size:6.300px">Packages</span>
<span class="t b" style="letter-spacing:-0.398px;left:99.5px;top:7.400px;font-size:6.300px">Help</span>
<span class="t b" style="letter-spacing:-0.023px;left:125.5px;top:7.400px;font-size:6.300px">Viewer</span>
<span class="t b" style="letter-spacing:-0.088px;left:158.7px;top:7.400px;font-size:6.300px">Presentation</span>
<div class="abs" style="left:236.0px;top:6.500px;width:8px;height:2.800px;border-radius:.8px;background:#b9bdc3;border:.4px solid #a3a8af"></div>
<div class="abs" style="left:246.3px;top:2.5px;width:8px;height:7.200px;border:.5px solid #a3a8af;border-top-width:1.400px;border-radius:.8px;background:#f4f6f8"></div>
<div class="ptb" style="top:12.500px;height:13px"></div>
<svg class="abs" style="left:0;top:14.000px" width="259" height="12" viewBox="0 0 259 12">
<g transform="translate(1.300 0)"><path d="M3.500 9.800v-6l.8-.8h2.600l.8.800h4.800v6z" fill="#e3b653"/><path d="M3.500 9.800l1-4.200h8.500l-1 4.200z" fill="#f3d487"/><circle cx="4.300" cy="3.800" r="2.700" fill="#2fa84f"/><circle cx="4.300" cy="3.800" r="1.100" fill="#fff"/></g>
<path d="M41 1.500v9" stroke="#d4d8dd" stroke-width=".5"/>
<rect x="47.500" y="2.500" width="6" height="7.500" fill="#fff" stroke="#d0d3d8" stroke-width=".4"/><circle cx="48.300" cy="5" r="2.700" fill="#2fa84f"/><circle cx="48.300" cy="5" r="1.100" fill="#fff"/>
<path d="M72.300 5.600h2.400l-1.200 1.600z" fill="#222"/>
<path d="M80 1.500v9" stroke="#d4d8dd" stroke-width=".5"/>
<rect x="85.500" y="2.500" width="6" height="7.500" fill="#fff" stroke="#d0d3d8" stroke-width=".4"/><circle cx="86.300" cy="5" r="2.700" fill="#d9312b"/><circle cx="86.300" cy="5" r="1.100" fill="#fff"/>
<rect x="123.500" y="2.800" width="7" height="7" rx=".8" fill="#fff" stroke="#c3c7cd" stroke-width=".5"/><path d="M125.500 6.600h2.200v-1.300l2.400 1.900-2.400 1.900v-1.300h-2.200z" fill="#2f7fd6"/>
<path d="M163 1.500v9" stroke="#d4d8dd" stroke-width=".5"/>
<circle cx="174" cy="6" r="3" fill="#3f86d8" stroke="#3f86d8" stroke-width="1.800" stroke-dasharray="1.500 .9"/><circle cx="174" cy="6" r="1.200" fill="#f4f6f9"/>
<path d="M182.800 5.600h2.400l-1.200 1.600z" fill="#222"/>
<circle cx="252" cy="6" r="2.800" fill="none" stroke="#d5d8dd" stroke-width="1.100" stroke-dasharray="14 4"/><path d="M252.500 1.500l2.500 1.500-2.500 1.500z" fill="#d5d8dd"/>
</svg>
<span class="t" style="letter-spacing:0.292px;left:16.0px;top:19.500px;font-size:6.400px">Folder</span>
<span class="t" style="letter-spacing:0.680px;left:57.0px;top:19.500px;font-size:6.400px">File</span>
<span class="t" style="letter-spacing:0.099px;left:96.0px;top:19.500px;font-size:6.400px">Delete</span>
<span class="t" style="letter-spacing:0.073px;left:134.0px;top:19.500px;font-size:6.400px">Rename</span>
<div class="abs" style="left:0;top:25.500px;width:100%;height:12.500px;background:#fff;border-bottom:.5px solid #d9dde2"></div>
<svg class="abs" style="left:0;top:26.400px" width="259" height="12" viewBox="0 0 259 12">
<rect x="3.200" y="2.500" width="6.600" height="6.600" rx="1.600" fill="#fff" stroke="#b5b5b5" stroke-width=".5"/>
<path d="M14.500 6.300l4.500-4 4.500 4" fill="none" stroke="#c0392b" stroke-width="1.100" stroke-linejoin="round"/><path d="M15.800 6v3.800h6.400v-3.800l-3.200-2.800z" fill="#f7f3ee" stroke="#9a8f86" stroke-width=".4"/><rect x="18.200" y="7" width="1.600" height="2.800" fill="#8a6d52"/>
<path d="M50.3 3.800l2 2.200-2 2.200" fill="none" stroke="#c3c7cd" stroke-width=".6"/>
<path d="M94.3 3.800l2 2.200-2 2.200" fill="none" stroke="#c3c7cd" stroke-width=".6"/>
<path d="M125.3 3.800l2 2.200-2 2.200" fill="none" stroke="#c3c7cd" stroke-width=".6"/>
<path d="M236 3l3.500-1.500 3.500 1.500v4.500l-3.500 1.700-3.500-1.700z" fill="#bcd9f3" stroke="#7fb0e0" stroke-width=".4"/><text x="239.500" y="7.200" font-size="4.500" font-weight="bold" text-anchor="middle" fill="#3f7fc4" font-family="Liberation Sans,sans-serif">R</text>
<path d="M247.500 .5v11" stroke="#d9dde2" stroke-width=".5"/>
</svg>
<span class="t" style="left:250.500px;top:31.400px;font-size:7px;color:#333;letter-spacing:.3px">...</span>
<span class="t" style="letter-spacing:0.055px;left:28.5px;top:32.700px;font-size:6.500px;color:#2a62c4">Home</span>
<span class="t" style="letter-spacing:0.071px;left:56.5px;top:32.700px;font-size:6.500px;color:#2a62c4">Documents</span>
<span class="t" style="letter-spacing:0.120px;left:100.5px;top:32.700px;font-size:6.500px;color:#2a62c4">datosR</span>
<span class="t" style="letter-spacing:0.052px;left:131.5px;top:32.700px;font-size:6.500px;color:#2a62c4">data files</span>
<div class="abs" style="left:0;top:38px;width:100%;height:10.800px;background:#f1f3f6;border-bottom:.5px solid #d5d9de"></div>
<div class="abs" style="left:17px;top:38px;width:.5px;height:10.800px;background:#d5d9de"></div>
<div class="abs" style="left:32.5px;top:38px;width:.5px;height:10.800px;background:#d5d9de"></div>
<div class="abs" style="left:149px;top:38px;width:.5px;height:10.800px;background:#d5d9de"></div>
<div class="abs" style="left:195.5px;top:38px;width:.5px;height:10.800px;background:#d5d9de"></div>
<svg class="abs" style="left:35.500px;top:41.800px" width="4.600" height="3.600" viewBox="0 0 4.600 3.600"><path d="M0 0h4.600l-2.300 3.600z" fill="#666"/></svg>
<span class="t" style="letter-spacing:0.145px;left:43.6px;top:44.100px;font-size:6.300px;color:#444">Name</span>
<span class="t" style="letter-spacing:0.065px;left:151.6px;top:44.100px;font-size:6.300px;color:#444">Size</span>
<span class="t" style="letter-spacing:0.089px;left:197.6px;top:44.100px;font-size:6.300px;color:#444">Modified</span>
<svg class="abs" style="left:20.500px;top:51.5px" width="8" height="9" viewBox="0 0 8 9"><path d="M3.500 .5l3.300 3.600h-2v2.600h3v1.800h-5v-4.400h-2.300z" fill="#2fa84f"/></svg>
<span class="t b" style="left:34px;top:56.5px;font-size:7.400px;color:#1a1ab0">..</span>
<div class="abs" style="left:6.400px;top:65.50px;width:6.800px;height:6.800px;border:.5px solid #bcbcbc;border-radius:1.700px;background:#fff"></div>
<svg class="abs" style="left:22.500px;top:64.50px" width="7" height="9" viewBox="0 0 7 9"><path d="M.4 .4h4l2.200 2.200v6h-6.200z" fill="#fff" stroke="#b9bdc4" stroke-width=".5"/><path d="M4.400 .4v2.200h2.200" fill="none" stroke="#b9bdc4" stroke-width=".5"/></svg>
<span class="t" style="left:34px;top:69.10px;font-size:7.450px;color:#1717a8;-webkit-text-stroke:.22px #1717a8">tiempopeso.txt</span>
<span class="t" style="left:151.600px;top:69.10px;font-size:7.200px;color:#222">440 B</span>
<span class="t" style="left:197.600px;top:69.10px;font-size:7.200px;color:#222">Feb 25, 2025, 12:26 PM</span>
<div class="abs" style="left:6.400px;top:78.50px;width:6.800px;height:6.800px;border:.5px solid #bcbcbc;border-radius:1.700px;background:#fff"></div>
<svg class="abs" style="left:22.500px;top:77.50px" width="7" height="9" viewBox="0 0 7 9"><path d="M.4 .4h4l2.200 2.200v6h-6.200z" fill="#fff" stroke="#b9bdc4" stroke-width=".5"/><path d="M4.400 .4v2.200h2.200" fill="none" stroke="#b9bdc4" stroke-width=".5"/></svg>
<span class="t" style="left:34px;top:82.10px;font-size:7.450px;color:#1717a8;-webkit-text-stroke:.22px #1717a8">SOCR_HcmWkg.txt</span>
<span class="t" style="left:151.600px;top:82.10px;font-size:7.200px;color:#222">341.8 KB</span>
<span class="t" style="left:197.600px;top:82.10px;font-size:7.200px;color:#222">Jan 21, 2025, 12:47 PM</span>
<div class="abs" style="left:6.400px;top:91.50px;width:6.800px;height:6.800px;border:.5px solid #bcbcbc;border-radius:1.700px;background:#fff"></div>
<svg class="abs" style="left:22.500px;top:90.50px" width="7" height="9" viewBox="0 0 7 9"><path d="M.4 .4h4l2.200 2.200v6h-6.200z" fill="#fff" stroke="#b9bdc4" stroke-width=".5"/><path d="M4.400 .4v2.200h2.200" fill="none" stroke="#b9bdc4" stroke-width=".5"/></svg>
<span class="t" style="left:34px;top:95.10px;font-size:7.450px;color:#1717a8;-webkit-text-stroke:.22px #1717a8">randvarxy.txt</span>
<span class="t" style="left:151.600px;top:95.10px;font-size:7.200px;color:#222">99 B</span>
<span class="t" style="left:197.600px;top:95.10px;font-size:7.200px;color:#222">Apr 1, 2025, 11:41 AM</span>
<div class="abs" style="left:6.400px;top:104.50px;width:6.800px;height:6.800px;border:.5px solid #bcbcbc;border-radius:1.700px;background:#fff"></div>
<svg class="abs" style="left:22px;top:103.80px" width="8" height="8.500" viewBox="0 0 8 8.500"><rect x=".3" y=".3" width="7.400" height="7.900" fill="#fff" stroke="#b9bdc4" stroke-width=".5"/><path d="M.3 2.300h7.400M.3 4.300h7.400M.3 6.300h7.400M2.800 .3v7.900M5.300 .3v7.900" stroke="#d4d7dc" stroke-width=".4"/><rect x=".3" y=".3" width="7.400" height="1.600" fill="#dcdfe4"/></svg>
<span class="t" style="left:34px;top:108.10px;font-size:7.450px;color:#1717a8;-webkit-text-stroke:.22px #1717a8">quinn.csv</span>
<span class="t" style="left:151.600px;top:108.10px;font-size:7.200px;color:#222">409 B</span>
<span class="t" style="left:197.600px;top:108.10px;font-size:7.200px;color:#222">Jan 21, 2025, 1:14 PM</span>
<div class="abs" style="left:6.400px;top:117.50px;width:6.800px;height:6.800px;border:.5px solid #bcbcbc;border-radius:1.700px;background:#fff"></div>
<svg class="abs" style="left:22.500px;top:116.50px" width="7" height="9" viewBox="0 0 7 9"><path d="M.4 .4h4l2.200 2.200v6h-6.200z" fill="#fff" stroke="#b9bdc4" stroke-width=".5"/><path d="M4.400 .4v2.200h2.200" fill="none" stroke="#b9bdc4" stroke-width=".5"/></svg>
<span class="t" style="left:34px;top:121.10px;font-size:7.450px;color:#1717a8;-webkit-text-stroke:.22px #1717a8">pr_1_2.dat</span>
<span class="t" style="left:151.600px;top:121.10px;font-size:7.200px;color:#222">150 B</span>
<span class="t" style="left:197.600px;top:121.10px;font-size:7.200px;color:#222">Jan 21, 2025, 12:22 PM</span>
<div class="abs" style="left:6.400px;top:130.50px;width:6.800px;height:6.800px;border:.5px solid #bcbcbc;border-radius:1.700px;background:#fff"></div>
<svg class="abs" style="left:22px;top:129.80px" width="8" height="8.500" viewBox="0 0 8 8.500"><rect x=".3" y=".3" width="7.400" height="7.900" fill="#fff" stroke="#b9bdc4" stroke-width=".5"/><path d="M.3 2.300h7.400M.3 4.300h7.400M.3 6.300h7.400M2.800 .3v7.900M5.300 .3v7.900" stroke="#d4d7dc" stroke-width=".4"/><rect x=".3" y=".3" width="7.400" height="1.600" fill="#dcdfe4"/></svg>
<span class="t" style="left:34px;top:134.10px;font-size:7.450px;color:#1717a8;-webkit-text-stroke:.22px #1717a8">plant_data.csv</span>
<span class="t" style="left:151.600px;top:134.10px;font-size:7.200px;color:#222">1.2 KB</span>
<span class="t" style="left:197.600px;top:134.10px;font-size:7.200px;color:#222">Feb 18, 2025, 12:10 PM</span>
<div class="abs" style="left:6.400px;top:143.50px;width:6.800px;height:6.800px;border:.5px solid #bcbcbc;border-radius:1.700px;background:#fff"></div>
<svg class="abs" style="left:22.500px;top:142.50px" width="7" height="9" viewBox="0 0 7 9"><path d="M.4 .4h4l2.200 2.200v6h-6.200z" fill="#fff" stroke="#b9bdc4" stroke-width=".5"/><path d="M4.400 .4v2.200h2.200" fill="none" stroke="#b9bdc4" stroke-width=".5"/></svg>
<span class="t" style="left:34px;top:147.10px;font-size:7.450px;color:#1717a8;-webkit-text-stroke:.22px #1717a8">Lipids.txt</span>
<span class="t" style="left:151.600px;top:147.10px;font-size:7.200px;color:#222">248 B</span>
<span class="t" style="left:197.600px;top:147.10px;font-size:7.200px;color:#222">Mar 31, 2025, 11:58 AM</span>
<div class="abs" style="left:6.400px;top:156.50px;width:6.800px;height:6.800px;border:.5px solid #bcbcbc;border-radius:1.700px;background:#fff"></div>
<svg class="abs" style="left:22.500px;top:155.50px" width="7" height="9" viewBox="0 0 7 9"><path d="M.4 .4h4l2.200 2.200v6h-6.200z" fill="#fff" stroke="#b9bdc4" stroke-width=".5"/><path d="M4.400 .4v2.200h2.200" fill="none" stroke="#b9bdc4" stroke-width=".5"/></svg>
<span class="t" style="left:34px;top:160.10px;font-size:7.450px;color:#1717a8;-webkit-text-stroke:.22px #1717a8">hw.txt</span>
<span class="t" style="left:151.600px;top:160.10px;font-size:7.200px;color:#222">3.8 KB</span>
<span class="t" style="left:197.600px;top:160.10px;font-size:7.200px;color:#222">Feb 4, 2025, 12:01 PM</span>
<div class="abs" style="left:6.400px;top:169.50px;width:6.800px;height:6.800px;border:.5px solid #bcbcbc;border-radius:1.700px;background:#fff"></div>
<svg class="abs" style="left:22.500px;top:168.50px" width="7" height="9" viewBox="0 0 7 9"><path d="M.4 .4h4l2.200 2.200v6h-6.200z" fill="#fff" stroke="#b9bdc4" stroke-width=".5"/><path d="M4.400 .4v2.200h2.200" fill="none" stroke="#b9bdc4" stroke-width=".5"/></svg>
<span class="t" style="left:34px;top:173.10px;font-size:7.450px;color:#1717a8;-webkit-text-stroke:.22px #1717a8">gimnasio20.xlsx</span>
<span class="t" style="left:151.600px;top:173.10px;font-size:7.200px;color:#222">9.3 KB</span>
<span class="t" style="left:197.600px;top:173.10px;font-size:7.200px;color:#222">Feb 11, 2025, 1:37 PM</span>
<div class="abs" style="left:6.400px;top:182.50px;width:6.800px;height:6.800px;border:.5px solid #bcbcbc;border-radius:1.700px;background:#fff"></div>
<svg class="abs" style="left:22.500px;top:181.50px" width="7" height="9" viewBox="0 0 7 9"><path d="M.4 .4h4l2.200 2.200v6h-6.200z" fill="#fff" stroke="#b9bdc4" stroke-width=".5"/><path d="M4.400 .4v2.200h2.200" fill="none" stroke="#b9bdc4" stroke-width=".5"/></svg>
<span class="t" style="left:34px;top:186.10px;font-size:7.450px;color:#1717a8;-webkit-text-stroke:.22px #1717a8">gimnasio20.txt</span>
<span class="t" style="left:151.600px;top:186.10px;font-size:7.200px;color:#222">245 B</span>
<span class="t" style="left:197.600px;top:186.10px;font-size:7.200px;color:#222">Feb 11, 2025, 1:11 PM</span>
<div class="abs" style="left:6.400px;top:195.50px;width:6.800px;height:6.800px;border:.5px solid #bcbcbc;border-radius:1.700px;background:#fff"></div>
<svg class="abs" style="left:22.500px;top:194.50px" width="7" height="9" viewBox="0 0 7 9"><path d="M.4 .4h4l2.200 2.200v6h-6.200z" fill="#fff" stroke="#b9bdc4" stroke-width=".5"/><path d="M4.400 .4v2.200h2.200" fill="none" stroke="#b9bdc4" stroke-width=".5"/></svg>
<span class="t" style="left:34px;top:199.10px;font-size:7.450px;color:#1717a8;-webkit-text-stroke:.22px #1717a8">estrona.txt</span>
<span class="t" style="left:151.600px;top:199.10px;font-size:7.200px;color:#222">228 B</span>
<span class="t" style="left:197.600px;top:199.10px;font-size:7.200px;color:#222">Apr 1, 2025, 11:02 AM</span>
<div class="abs" style="left:6.400px;top:208.50px;width:6.800px;height:6.800px;border:.5px solid #bcbcbc;border-radius:1.700px;background:#fff"></div>
<svg class="abs" style="left:22.500px;top:207.50px" width="7" height="9" viewBox="0 0 7 9"><path d="M.4 .4h4l2.200 2.200v6h-6.200z" fill="#fff" stroke="#b9bdc4" stroke-width=".5"/><path d="M4.400 .4v2.200h2.200" fill="none" stroke="#b9bdc4" stroke-width=".5"/></svg>
<span class="t" style="left:34px;top:212.10px;font-size:7.450px;color:#1717a8;-webkit-text-stroke:.22px #1717a8">dats5.txt</span>
<span class="t" style="left:151.600px;top:212.10px;font-size:7.200px;color:#222">302 B</span>
<span class="t" style="left:197.600px;top:212.10px;font-size:7.200px;color:#222">Feb 11, 2025, 1:02 PM</span>
<div class="abs" style="left:6.400px;top:221.50px;width:6.800px;height:6.800px;border:.5px solid #bcbcbc;border-radius:1.700px;background:#fff"></div>
<svg class="abs" style="left:22.500px;top:220.50px" width="7" height="9" viewBox="0 0 7 9"><path d="M.4 .4h4l2.200 2.200v6h-6.200z" fill="#fff" stroke="#b9bdc4" stroke-width=".5"/><path d="M4.400 .4v2.200h2.200" fill="none" stroke="#b9bdc4" stroke-width=".5"/></svg>
<span class="t" style="left:34px;top:225.10px;font-size:7.450px;color:#1717a8;-webkit-text-stroke:.22px #1717a8">Cooling.xlsx</span>
<span class="t" style="left:151.600px;top:225.10px;font-size:7.200px;color:#222">9.2 KB</span>
<span class="t" style="left:197.600px;top:225.10px;font-size:7.200px;color:#222">Jan 21, 2025, 12:55 PM</span>
<div class="abs" style="left:6.400px;top:234.50px;width:6.800px;height:6.800px;border:.5px solid #bcbcbc;border-radius:1.700px;background:#fff"></div>
<svg class="abs" style="left:22.500px;top:233.50px" width="7" height="9" viewBox="0 0 7 9"><path d="M.4 .4h4l2.200 2.200v6h-6.200z" fill="#fff" stroke="#b9bdc4" stroke-width=".5"/><path d="M4.400 .4v2.200h2.200" fill="none" stroke="#b9bdc4" stroke-width=".5"/></svg>
<span class="t" style="left:34px;top:238.10px;font-size:7.450px;color:#1717a8;-webkit-text-stroke:.22px #1717a8">colesterol.txt</span>
<span class="t" style="left:151.600px;top:238.10px;font-size:7.200px;color:#222">444 B</span>
<span class="t" style="left:197.600px;top:238.10px;font-size:7.200px;color:#222">Mar 31, 2025, 11:30 AM</span>
<div class="abs" style="left:6.400px;top:247.50px;width:6.800px;height:6.800px;border:.5px solid #bcbcbc;border-radius:1.700px;background:#fff"></div>
<svg class="abs" style="left:22.500px;top:246.50px" width="7" height="9" viewBox="0 0 7 9"><path d="M.4 .4h4l2.200 2.200v6h-6.200z" fill="#fff" stroke="#b9bdc4" stroke-width=".5"/><path d="M4.400 .4v2.200h2.200" fill="none" stroke="#b9bdc4" stroke-width=".5"/></svg>
<span class="t" style="left:34px;top:251.10px;font-size:7.450px;color:#1717a8;-webkit-text-stroke:.22px #1717a8">catarro.txt</span>
<span class="t" style="left:151.600px;top:251.10px;font-size:7.200px;color:#222">408 B</span>
<span class="t" style="left:197.600px;top:251.10px;font-size:7.200px;color:#222">Apr 1, 2025, 10:31 AM</span>
<div class="abs" style="left:257.500px;top:49px;width:2px;height:203px;background:#fff"></div>
</div>
</div>
</div>
<div class="abs" style="z-index:6;left:200px;top:21.500px;width:126.800px;height:157.800px;border-radius:5px;background:#ececec;box-shadow:0 0 0 .5px rgba(0,0,0,.22),0 5px 14px rgba(0,0,0,.28);font-family:'Liberation Sans',sans-serif;font-size:7.600px;color:#262626">
<div class="abs" style="left:3px;top:73px;width:119.500px;height:12.300px;border-radius:3px;background:#d9d9d9"></div>
<span class="t" style="letter-spacing:0.025px;left:7.5px;top:9.80px">New Session</span>
<div class="abs" style="left:7.5px;top:18.20px;width:111.5px;height:.6px;background:#d3d3d3"></div>
<span class="t" style="letter-spacing:0.120px;left:7.5px;top:28.80px;color:#b4b4b4">Interrupt R</span>
<span class="t" style="letter-spacing:0.017px;left:7.5px;top:41.30px">Terminate R...</span>
<div class="abs" style="left:7.5px;top:50.20px;width:111.5px;height:.6px;background:#d3d3d3"></div>
<span class="t" style="letter-spacing:-0.009px;left:7.5px;top:60.55px">Restart R</span>
<span class="t" style="left:98.500px;top:61px;color:#adadad;font-family:'DejaVu Sans',sans-serif;font-size:7.200px;letter-spacing:.9px">⇧⌘0</span>
<div class="abs" style="left:7.5px;top:69.20px;width:111.5px;height:.6px;background:#d3d3d3"></div>
<span class="t" style="letter-spacing:0.142px;left:7.5px;top:79.55px">Set Working Directory</span>
<svg class="abs" style="left:114px;top:76px" width="4" height="6.500" viewBox="0 0 4 6.500"><path d="M.7 .7l2.600 2.550-2.600 2.550" fill="none" stroke="#222" stroke-width="1" stroke-linecap="round" stroke-linejoin="round"/></svg>
<div class="abs" style="left:7.5px;top:88.20px;width:111.5px;height:.6px;background:#d3d3d3"></div>
<span class="t" style="letter-spacing:0.018px;left:7.5px;top:98.55px">Load Workspace...</span>
<span class="t" style="letter-spacing:0.007px;left:7.5px;top:111.05px">Save Workspace As...</span>
<div class="abs" style="left:7.5px;top:119.45px;width:111.5px;height:.6px;background:#d3d3d3"></div>
<span class="t" style="letter-spacing:0.020px;left:7.5px;top:130.55px">Clear Workspace...</span>
<div class="abs" style="left:7.5px;top:138.70px;width:111.5px;height:.6px;background:#d3d3d3"></div>
<span class="t" style="letter-spacing:0.007px;left:7.5px;top:149.30px">Quit Session...</span>
</div>
<div class="abs" style="z-index:7;left:324.500px;top:91.800px;width:132px;height:62.100px;border-radius:5px;background:#eeeeee;box-shadow:0 0 0 .5px rgba(0,0,0,.22),0 5px 14px rgba(0,0,0,.28);font-family:'Liberation Sans',sans-serif;font-size:7.600px;color:#262626">
<div class="abs" style="left:2.700px;top:47.300px;width:126.400px;height:12.200px;border-radius:3px;background:#5b9df8"></div>
<span class="t" style="letter-spacing:0.162px;left:7.900px;top:9.90px">To Project Directory</span>
<span class="t" style="letter-spacing:0.071px;left:7.900px;top:22.60px">To Source File Location</span>
<span class="t" style="letter-spacing:0.035px;left:7.900px;top:35.30px">To Files Pane Location</span>
<div class="abs" style="left:7.900px;top:43.400px;width:115.200px;height:.6px;background:#d3d3d3"></div>
<span class="t" style="letter-spacing:0.093px;left:7.900px;top:54.10px;color:#fff">Choose Directory...</span>
<span class="t" style="left:102.500px;top:54.200px;color:#fff;font-family:'DejaVu Sans',sans-serif;font-size:7.200px;letter-spacing:1.100px">⌃⇧</span>
<span class="t" style="left:119px;top:54.100px;color:#fff">H</span>
</div>
<div class="abs" style="left:27.500px;top:508.800px;width:792.500px;height:39px;border-radius:8.500px;background:rgba(103,103,106,.97);box-shadow:inset 0 0 0 .5px rgba(255,255,255,.18)"></div>
<svg class="abs" style="left:0;top:505px" width="848" height="46" viewBox="0 505 848 46" font-family="Liberation Sans,sans-serif">
<defs>
<linearGradient id="gfb" x1="0" y1="0" x2="0" y2="1"><stop offset="0" stop-color="#22b1f7"/><stop offset="1" stop-color="#1a6fe6"/></linearGradient>
<linearGradient id="gfw" x1="0" y1="0" x2="0" y2="1"><stop offset="0" stop-color="#f4f6fa"/><stop offset="1" stop-color="#cdd9ee"/></linearGradient>
<linearGradient id="gmail" x1="0" y1="0" x2="0" y2="1"><stop offset="0" stop-color="#1cb0fb"/><stop offset="1" stop-color="#1a77f2"/></linearGradient>
<linearGradient id="gas" x1="0" y1="0" x2="0" y2="1"><stop offset="0" stop-color="#1fb3fb"/><stop offset="1" stop-color="#1a6de8"/></linearGradient>
<linearGradient id="gwa" x1="0" y1="0" x2="0" y2="1"><stop offset="0" stop-color="#5ef277"/><stop offset="1" stop-color="#1fc03f"/></linearGradient>
<linearGradient id="gset" x1="0" y1="0" x2="0" y2="1"><stop offset="0" stop-color="#c9ccd0"/><stop offset="1" stop-color="#7f8389"/></linearGradient>
<linearGradient id="gfold" x1="0" y1="0" x2="0" y2="1"><stop offset="0" stop-color="#6cc7fb"/><stop offset="1" stop-color="#3fa7f2"/></linearGradient>
<clipPath id="rc"><rect x="-12.300" y="-12.300" width="24.600" height="24.600" rx="5.600"/></clipPath>
</defs>
<g transform="translate(45.8 527.3)" clip-path="url(#rc)"><rect x="-12.300" y="-12.300" width="24.600" height="24.600" fill="url(#gfw)"/><path d="M-12.300 -12.300h13.800c-2.300 4-3.600 8.500-3.800 13.500h3.300c.2 3.800.8 7.500 2 11.100h-15.300z" fill="url(#gfb)"/><path d="M-6.500 -5v2.600M5.500 -5v2.600" stroke="#1d2a3f" stroke-width="1.100" stroke-linecap="round"/><path d="M-7.500 4.500c4.500 3.600 10.500 3.600 15 0" fill="none" stroke="#1d2a3f" stroke-width="1" stroke-linecap="round"/><path d="M1.500 -12.300c-2.300 4-3.600 8.500-3.800 13.500h3.300c.2 3.800.8 7.500 2 11.100" fill="none" stroke="#1d2a3f" stroke-width=".7"/></g>
<g transform="translate(78.7 527.3)" clip-path="url(#rc)"><rect x="-12.300" y="-12.300" width="24.600" height="24.600" fill="#d4d5d9"/><rect x="-8.3" y="-8.3" width="4.600" height="4.600" rx="1.200" fill="#35c759"/><rect x="-2.2" y="-8.3" width="4.600" height="4.600" rx="1.200" fill="#f7b500"/><rect x="3.9" y="-8.3" width="4.600" height="4.600" rx="1.200" fill="#f79a00"/><rect x="-8.3" y="-2.2" width="4.600" height="4.600" rx="1.200" fill="#e0352b"/><rect x="-2.2" y="-2.2" width="4.600" height="4.600" rx="1.200" fill="#a6a8ad"/><rect x="3.9" y="-2.2" width="4.600" height="4.600" rx="1.200" fill="#fa5a4a"/><rect x="-8.3" y="3.9" width="4.600" height="4.600" rx="1.200" fill="#a55be0"/><rect x="-2.2" y="3.9" width="4.600" height="4.600" rx="1.200" fill="#1fa8f5"/><rect x="3.9" y="3.9" width="4.600" height="4.600" rx="1.200" fill="#2fcf86"/></g>
<g transform="translate(111.7 527.3)" clip-path="url(#rc)"><rect x="-12.300" y="-12.300" width="24.600" height="24.600" fill="#fbfbfb"/><circle r="10.300" fill="#1f8df0"/><circle r="10.300" fill="none" stroke="#dfe3e8" stroke-width=".8"/><circle r="8.800" fill="none" stroke="#7cc0fa" stroke-width=".5" stroke-dasharray=".4 1.100"/><path d="M7 -7l-5.600 8.400-2.800-2.800z" fill="#f0443a"/><path d="M-7 7l5.600-8.400 2.800 2.800z" fill="#f4f6f8"/></g>
<g transform="translate(145 527.3)" clip-path="url(#rc)"><rect x="-12.300" y="-12.300" width="24.600" height="24.600" fill="#fbfbfb"/><circle r="10" fill="#e33b2e"/><path d="M0 0L-8.660 -5A10 10 0 0 0 -0 10z" fill="#2aa24a" transform="rotate(0)"/><path d="M0 0L0 10A10 10 0 0 0 8.660 -5z" fill="#fbc116" transform="rotate(-30)"/><path d="M0 0L-8.660 -5A10 10 0 0 0 0 10z" fill="#2aa24a" transform="rotate(-30)"/><circle r="4.700" fill="#fff"/><circle r="3.700" fill="#2f7df0"/></g>
<g transform="translate(177.7 527.3)" clip-path="url(#rc)"><rect x="-12.300" y="-12.300" width="24.600" height="24.600" fill="url(#gmail)"/><rect x="-8.300" y="-5.600" width="16.600" height="11.200" rx="1.500" fill="#fff"/><path d="M-8 -5l8 6.300 8-6.300M-8 5.200l5.800-5M8 5.200l-5.800-5" fill="none" stroke="#c5ccd6" stroke-width=".8"/></g>
<g transform="translate(210.7 527.3)" clip-path="url(#rc)"><rect x="-12.300" y="-12.300" width="24.600" height="24.600" fill="#eef0ea"/><path d="M-12.300 -12.300h8l-3 24.600h-5z" fill="#6fcf6a"/><path d="M2 -12.300h10.300v12l-6 -3z" fill="#7fd98a"/><circle cx="8" cy="-7" r="4" fill="#c8efc6"/><path d="M-12.300 5l8 3v4.300h-8z" fill="#f2a6c8"/><path d="M4 12.300l8.300-6v6z" fill="#f7cf4a"/><path d="M-4 -12.300l2 24.600" stroke="#fff" stroke-width="2.600"/><path d="M-4 -12.300l1 12" stroke="#5bb0f5" stroke-width="2.200"/><circle cx="-1" cy="2.500" r="5.600" fill="#2b83f2" stroke="#fff" stroke-width="1"/><path d="M-1 -1l2.700 6-2.700-1.400-2.700 1.400z" fill="#fff"/></g>
<g transform="translate(243.7 527.3)" clip-path="url(#rc)"><rect x="-12.300" y="-12.300" width="24.600" height="24.600" fill="#fbfbfb"/><ellipse cx="0" cy="-5.200" rx="3" ry="4.800" fill="#f5a623" fill-opacity=".85" transform="rotate(0)"/><ellipse cx="0" cy="-5.200" rx="3" ry="4.800" fill="#f7d038" fill-opacity=".85" transform="rotate(45)"/><ellipse cx="0" cy="-5.200" rx="3" ry="4.800" fill="#8bd346" fill-opacity=".85" transform="rotate(90)"/><ellipse cx="0" cy="-5.200" rx="3" ry="4.800" fill="#3fc9a5" fill-opacity=".85" transform="rotate(135)"/><ellipse cx="0" cy="-5.200" rx="3" ry="4.800" fill="#3aa0f0" fill-opacity=".85" transform="rotate(180)"/><ellipse cx="0" cy="-5.200" rx="3" ry="4.800" fill="#8d6fe0" fill-opacity=".85" transform="rotate(225)"/><ellipse cx="0" cy="-5.200" rx="3" ry="4.800" fill="#d95fb4" fill-opacity=".85" transform="rotate(270)"/><ellipse cx="0" cy="-5.200" rx="3" ry="4.800" fill="#f0544a" fill-opacity=".85" transform="rotate(315)"/></g>
<g transform="translate(277 527.3)" clip-path="url(#rc)"><rect x="-12.300" y="-12.300" width="24.600" height="24.600" fill="#fbfbfb"/><rect x="-12.300" y="-12.300" width="24.600" height="7.200" fill="#f0453b"/><text x="0" y="-6.700" font-size="5" font-weight="bold" fill="#fff" text-anchor="middle">ABR</text><text x="0" y="8.500" font-size="14.500" fill="#333" text-anchor="middle">2</text></g>
<g transform="translate(310 527.3)" clip-path="url(#rc)"><rect x="-12.300" y="-12.300" width="24.600" height="24.600" fill="#fbfbfb"/><rect x="-12.300" y="-12.300" width="24.600" height="6.800" fill="#fbcb2e"/><path d="M-12.300 -1.500h24.600M-12.300 2.500h24.600M-12.300 6.500h24.600" stroke="#dcdcdc" stroke-width=".5"/><rect x="-12.300" y="-5.500" width="24.600" height="17.800" fill="#f7f3e8" fill-opacity=".7"/></g>
<g transform="translate(343 527.3)" clip-path="url(#rc)"><rect x="-12.300" y="-12.300" width="24.600" height="24.600" fill="url(#gas)"/><path d="M-1.500 -7.500l7.500 13M1.500 -7.500l-7.500 13M-8.500 2.600h17" stroke="#fff" stroke-width="2.200" stroke-linecap="round" fill="none"/></g>
<g transform="translate(376 527.3)" clip-path="url(#rc)"><rect x="-12.300" y="-12.300" width="24.600" height="24.600" fill="url(#gset)"/><circle r="9.300" fill="#4a4d52"/><circle r="9.300" fill="none" stroke="#2f3135" stroke-width="1"/><circle r="6.800" fill="none" stroke="#9a9ea5" stroke-width="1.700"/><circle r="2" fill="#9a9ea5"/><path d="M0 0v-6.800M0 0l5.900 3.400M0 0l-5.900 3.400" stroke="#9a9ea5" stroke-width="1.500"/></g>
<g transform="translate(409 527.3)" clip-path="url(#rc)"><rect x="-12.300" y="-12.300" width="24.600" height="24.600" fill="#fbfbfb"/><rect x="-4" y="-8.500" width="13" height="17" rx="1.200" fill="#21a366"/><rect x="2.500" y="-8.500" width="6.500" height="5.700" fill="#33c481"/><rect x="2.500" y="-2.800" width="6.500" height="5.700" fill="#107c41"/><rect x="-4" y="2.900" width="13" height="5.600" fill="#185c37"/><rect x="-9.500" y="-5" width="10" height="10" rx="1" fill="#107c41"/><text x="-4.500" y="2.700" font-size="7.500" font-weight="bold" fill="#fff" text-anchor="middle">X</text></g>
<g transform="translate(441.5 527.3)" clip-path="url(#rc)"><rect x="-12.300" y="-12.300" width="24.600" height="24.600" fill="#fbfbfb"/><circle cx="2" cy="0" r="8.600" fill="#ed6c47"/><path d="M2 -8.600a8.600 8.600 0 0 1 8.600 8.600h-8.600z" fill="#ff8f6b"/><path d="M2 8.600a8.600 8.600 0 0 0 8.600-8.600h-8.600z" fill="#d35230"/><rect x="-9.500" y="-5" width="10" height="10" rx="1" fill="#c43e1c"/><text x="-4.500" y="2.700" font-size="7.500" font-weight="bold" fill="#fff" text-anchor="middle">P</text></g>
<g transform="translate(474.5 527.3)" clip-path="url(#rc)"><rect x="-12.300" y="-12.300" width="24.600" height="24.600" fill="#fbfbfb"/><rect x="-4" y="-8.500" width="13" height="17" rx="1.200" fill="#41a5ee"/><rect x="-4" y="-4.200" width="13" height="4.300" fill="#2b7cd3"/><rect x="-4" y="0" width="13" height="4.300" fill="#185abd"/><rect x="-4" y="4.300" width="13" height="4.200" fill="#103f91"/><rect x="-9.500" y="-5" width="10" height="10" rx="1" fill="#185abd"/><text x="-4.500" y="2.700" font-size="7.500" font-weight="bold" fill="#fff" text-anchor="middle">W</text></g>
<g transform="translate(507.5 527.3)" clip-path="url(#rc)"><rect x="-12.300" y="-12.300" width="24.600" height="24.600" fill="url(#gwa)"/><path d="M0 -8.300a8.300 8.300 0 1 1-4.200 15.500l-4.300 1.200 1.200-4.200a8.300 8.300 0 0 1 7.300-12.500z" fill="none" stroke="#fff" stroke-width="1.700"/><path d="M-3.500 -3.600c-.6 1.300.3 3.300 2 5s3.800 2.700 5 2l.9-1.300-2-1.300-.9.700c-1-.4-2.300-1.700-2.700-2.700l.7-.9-1.300-2z" fill="#fff"/></g>
<g transform="translate(541.3 527.3)" clip-path="url(#rc)"><rect x="-12.300" y="-12.300" width="24.600" height="24.600" fill="#fbfbfb"/><rect x="-3.500" y="-8.500" width="12.500" height="17" rx="1.200" fill="#1490df"/><rect x="2.700" y="-8.500" width="6.300" height="5.700" fill="#28a8ea"/><rect x="-3.500" y="-2.800" width="6.200" height="5.700" fill="#0f78d4"/><rect x="2.700" y="-2.800" width="6.300" height="5.700" fill="#1490df"/><rect x="-3.500" y="2.900" width="12.500" height="5.600" fill="#0a5bb0"/><rect x="-9.500" y="-5" width="10" height="10" rx="1" fill="#0f6cbd"/><text x="-4.500" y="2.700" font-size="7.500" font-weight="bold" fill="#fff" text-anchor="middle">O</text></g>
<g transform="translate(574 527.3)"><circle r="11.600" fill="#1ed760"/><path d="M-6.600 -3.600c4.500-1.300 9.600-.9 13.600 1.400" fill="none" stroke="#111" stroke-width="2.100" stroke-linecap="round"/><path d="M-5.800 .6c3.800-1 7.800-.6 11.200 1.300" fill="none" stroke="#111" stroke-width="1.800" stroke-linecap="round"/><path d="M-5 4.400c3.100-.8 6.200-.5 8.900 1" fill="none" stroke="#111" stroke-width="1.500" stroke-linecap="round"/></g>
<rect x="598.200" y="514.500" width=".7" height="26" fill="#4a4a4d"/>
<g transform="translate(621.7 527.3)"><rect x="-10.500" y="-11.500" width="20" height="21" rx="1.500" fill="#f4f4f4"/><rect x="-9.300" y="-10.300" width="17.600" height="18.600" fill="#9cc4ea"/><path d="M-9.300 1l5-3.500 4.500 2.500 4-3 4.100 3v8.300h-17.600z" fill="#dfe8f2"/><path d="M-9.300 4l6-2 5 2.500 6.600-2v5.800h-17.600z" fill="#5c6f8c"/><rect x="1" y="1.500" width="9.500" height="6" rx="1" fill="#1c1c1e"/><rect x="2.500" y="7" width="6.500" height="4.500" rx="1" fill="#3a3a3d"/><ellipse cx="5.800" cy="9" rx="2.600" ry="1.800" fill="#c9ccd2"/></g>
<g transform="translate(654.6 527.3)" clip-path="url(#rc)"><rect x="-12.300" y="-12.300" width="24.600" height="24.600" fill="#e9ebe9"/><circle r="10" fill="#34c759"/><circle r="6.500" fill="#5fdc80"/><path d="M0 0L-6 -8A10 10 0 0 1 6 -8z" fill="#1fa046" fill-opacity=".6"/><circle r="3.600" fill="#fff"/><circle r="2.500" fill="#1f7cf2"/></g>
<g transform="translate(687.5 527.3)" clip-path="url(#rc)"><rect x="-12.300" y="-12.300" width="24.600" height="24.600" fill="#fbfbfb"/><path d="M-12.300 -7h24.600M-12.300 -4h24.600M-12.300 -1h24.600M-12.300 2h24.600M-12.300 5h24.600M-12.300 8h24.600" stroke="#cfd3da" stroke-width=".5"/><path d="M-8.500 -12.300v24.600" stroke="#f0a9a0" stroke-width=".5"/><path d="M9.500 -12l2.500 1.500-9.500 20.500-3 2.300.5-3.800z" fill="#a9aeb8" stroke="#6c7078" stroke-width=".5"/></g>
<g transform="translate(720.4 527.3)" clip-path="url(#rc)"><rect x="-12.300" y="-12.300" width="24.600" height="24.600" fill="#fbfbfb"/><circle cy="-1.500" r="8.800" fill="#75aadb"/><text x="0" y="3" font-size="12.500" fill="#fff" text-anchor="middle" font-family="Liberation Serif,serif">R</text><rect x="-12.300" y="7.500" width="24.600" height="4.800" fill="#6c9fd3"/><text x="0" y="11.300" font-size="3.400" fill="#dfeaf7" text-anchor="middle">datosR</text></g>
<rect x="745.200" y="514.500" width=".7" height="26" fill="#4a4a4d"/>
<g transform="translate(768.7 527.3)"><path d="M-12 -8.500a1.500 1.500 0 0 1 1.500-1.500h6l2 2h13a1.500 1.500 0 0 1 1.500 1.500v15a1.500 1.500 0 0 1-1.500 1.500h-21a1.500 1.500 0 0 1-1.500-1.500z" fill="#3c9be8"/><rect x="-12" y="-6" width="24" height="16" rx="1.500" fill="url(#gfold)"/><circle cy="2" r="4.300" fill="none" stroke="#2f86d6" stroke-width=".9"/><path d="M0 -.3v4M-1.800 2l1.800 1.900 1.800-1.900" fill="none" stroke="#2f86d6" stroke-width=".9"/></g>
<g transform="translate(803.6 527.3)"><path d="M-8.500 -9h17l-1.800 19.500a1.500 1.500 0 0 1-1.500 1.300h-10.400a1.500 1.500 0 0 1-1.500-1.300z" fill="#e4e6ea" fill-opacity=".92" stroke="#f6f7f9" stroke-width=".6"/><ellipse cy="-9" rx="8.500" ry="2.300" fill="#c9ccd2" stroke="#f6f7f9" stroke-width=".6"/><path d="M-5 -9.500l2-1 2 1.200 2.500-1.500 2.500 1.500-2 .8z" fill="#7a6a5a"/><path d="M-4 -5v14M0 -5v15M4 -5v14" stroke="#cfd2d8" stroke-width=".6"/></g>
<circle cx="45.8" cy="545.400" r=".9" fill="#111"/>
<circle cx="474.5" cy="545.400" r=".9" fill="#111"/>
<circle cx="621.7" cy="545.400" r=".9" fill="#111"/>
<circle cx="720.4" cy="545.400" r=".9" fill="#111"/>
</svg>
</body>
</html>
